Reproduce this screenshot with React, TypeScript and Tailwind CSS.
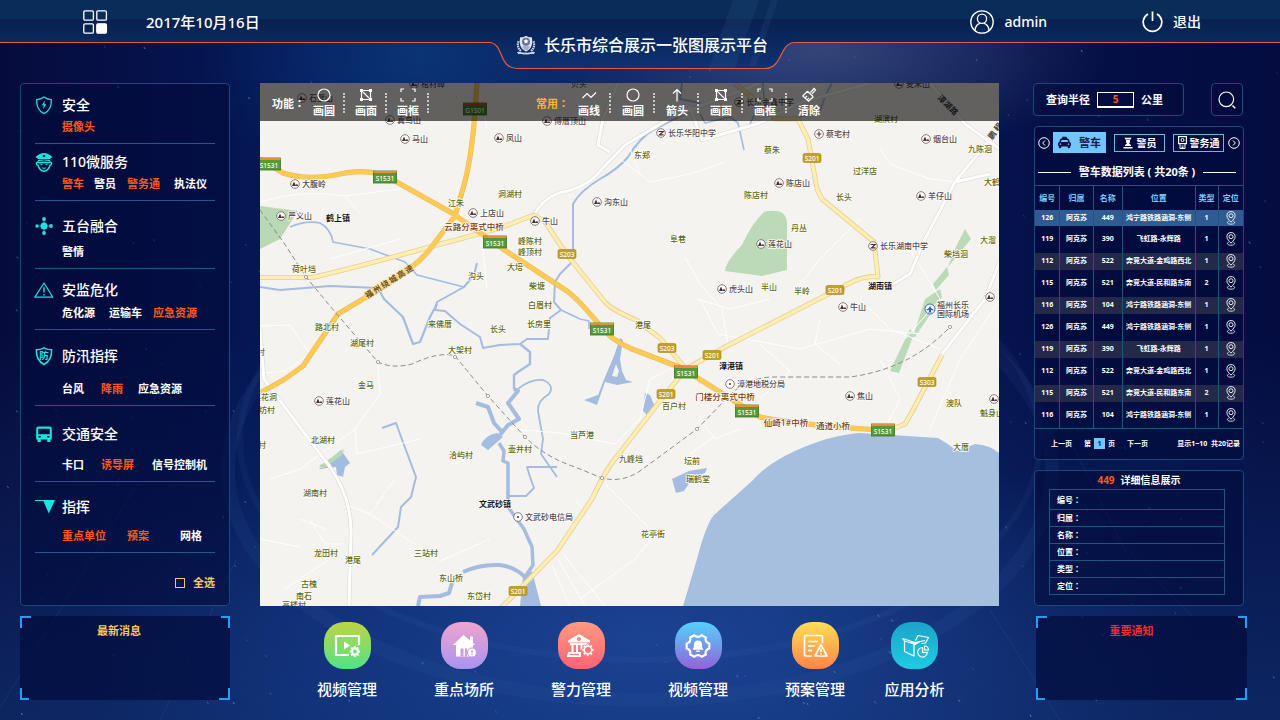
import React, { useState } from "react";
import { FaTaxi } from "react-icons/fa";

type XY = [number, number];

/* ---------- starfield ---------- */

const stars = Array.from({ length: 240 }, (_, i) => {
  const a = Math.abs(Math.sin(i * 127.1 + 11.7) * 43758.5453) % 1;
  const b = Math.abs(Math.sin(i * 269.5 + 83.3) * 24634.6345) % 1;
  const c = Math.abs(Math.sin(i * 57.3 + 9.1) * 9631.137) % 1;
  return { x: a * 1280, y: 44 + b * 676, o: 0.15 + c * 0.4 };
});

function Backdrop() {
  return (
    <svg className="pointer-events-none absolute inset-0 h-full w-full" viewBox="0 0 1280 720" preserveAspectRatio="none" aria-hidden="true">
      <defs>
        <radialGradient id="glowLow">
          <stop offset="0" stopColor="#2450a8" stopOpacity="0.6" />
          <stop offset="1" stopColor="#2450a8" stopOpacity="0" />
        </radialGradient>
        <radialGradient id="glowTop">
          <stop offset="0" stopColor="#41507f" stopOpacity="0.75" />
          <stop offset="1" stopColor="#41507f" stopOpacity="0" />
        </radialGradient>
        <radialGradient id="glowLeft">
          <stop offset="0" stopColor="#0d3f80" stopOpacity="0.7" />
          <stop offset="1" stopColor="#0d3f80" stopOpacity="0" />
        </radialGradient>
        <linearGradient id="rise" x1="0" y1="0" x2="0" y2="1">
          <stop offset="0" stopColor="#164084" stopOpacity="0" />
          <stop offset="1" stopColor="#164084" stopOpacity="0.5" />
        </linearGradient>
      </defs>
      <rect y="330" width="1280" height="390" fill="url(#rise)" />
      <ellipse cx="640" cy="640" rx="560" ry="220" fill="url(#glowLow)" />
      <ellipse cx="820" cy="50" rx="290" ry="110" fill="url(#glowTop)" />
      <ellipse cx="420" cy="55" rx="220" ry="150" fill="url(#glowLeft)" />
      <ellipse cx="640" cy="470" rx="412" ry="230" fill="none" stroke="#3a6cb0" strokeOpacity="0.1" strokeWidth="14" />
      <ellipse cx="640" cy="440" rx="400" ry="220" fill="none" stroke="#5b86c0" strokeOpacity="0.07" strokeWidth="6" />
      <path d="M0 708 140 480M160 720 236 560M1080 500 1200 625M990 610 1060 720M1060 420 1130 560" stroke="#4f86d8" strokeOpacity="0.14" fill="none" />
      {stars.map((s, i) => (
        <path key={i} d={`M${s.x.toFixed(1)} ${s.y.toFixed(1)}l1.2 2`} stroke="#a9bfff" strokeOpacity={s.o} strokeWidth="1" />
      ))}
    </svg>
  );
}

/* ---------- header ---------- */

function Emblem() {
  return (
    <svg width="20" height="20" viewBox="0 0 20 20" aria-hidden="true">
      <path d="M2.6 6.2C1 10 2 14 5.4 16.2M17.4 6.2C19 10 18 14 14.6 16.2" fill="none" stroke="#c9d2e6" strokeWidth="2.2" strokeDasharray="1.6 .7" />
      <path d="M1 17.4c3-1.6 5 .8 9 .2 4 .6 6-1.8 9-.2l-1.4 1.8c-2.6-.8-4.6.6-7.6.4-3 .2-5-1.2-7.6-.4z" fill="#c9d2e6" />
      <path d="M10 .8c2 1.3 4 1.6 5.8 1.4.8 3 .6 7.6-1 10.3-1.2 2-3 3.2-4.8 4-1.8-.8-3.6-2-4.8-4-1.6-2.7-1.8-7.3-1-10.3C6 2.4 8 2.1 10 .8z" fill="#dfe5f2" />
      <circle cx="10" cy="6.800" r="4" fill="#5d6f9b" />
      <path d="m10 3.600.8 1.700 1.800.2-1.300 1.300.3 1.800-1.600-.9-1.600.9.3-1.800-1.300-1.300 1.800-.2z" fill="#fff" />
      <path d="M6.500 12h7M7.500 14h5" stroke="#5d6f9b" strokeWidth=".9" />
    </svg>
  );
}

function Header() {
  return (
    <header className="relative flex h-[83px] items-start">
      <div className="flex h-[43px] flex-1 items-center border-b border-[#f0592f] bg-[linear-gradient(#0a2c59_19px,#07204f_19px,#0a2a5e)] pt-[2px] pl-[83px]">
        <button type="button" aria-label="菜单" className="flex">
          <svg width="25" height="25" viewBox="0 0 25 25" fill="none" stroke="#fff" strokeWidth="1.300" aria-hidden="true">
            <rect x=".8" y=".8" width="9.600" height="9.400" rx="1.200" />
            <rect x="13.800" y=".8" width="9.600" height="9.400" rx="1.200" />
            <rect x=".8" y="13.800" width="9.600" height="9.400" rx="1.200" />
            <rect x="13.800" y="13.800" width="9.600" height="9.400" rx="1.200" fill="#fff" />
          </svg>
        </button>
        <time className="ml-[38px] text-[15px] leading-5 font-medium">2017年10月16日</time>
      </div>
      <div className="relative w-[310px]">
        <svg className="block h-[70px] w-full" viewBox="0 0 310 70" aria-hidden="true">
          <defs>
            <linearGradient id="notch" x1="0" y1="0" x2="0" y2="1">
              <stop offset="0" stopColor="#07204f" />
              <stop offset="1" stopColor="#0d3273" />
            </linearGradient>
          </defs>
          <rect width="310" height="19" fill="#0a2c59" />
          <path d="M0 19H310V42.500H308C292 42.500 296 68.500 278 68.500H30C11 68.500 17 42.500 2 42.500H0z" fill="url(#notch)" />
          <path d="M0 42.500H2C17 42.500 11 68.500 30 68.500H278C296 68.500 292 42.500 308 42.500H310" fill="none" stroke="#f0592f" strokeWidth="1.200" />
          <path d="M246 0h26l-24 68h-26zM284 0h7l-22 66h-7z" fill="#4b7fae" fillOpacity=".12" />
        </svg>
        <div className="absolute inset-x-0 top-[33px] flex items-center justify-center gap-2">
          <Emblem />
          <h1 className="text-[16px] leading-6 font-medium">长乐市综合展示一张图展示平台</h1>
        </div>
      </div>
      <div className="flex h-[43px] flex-1 items-center justify-end gap-[95px] border-b border-[#e0604a] bg-[linear-gradient(#0a2c59_19px,#07204f_19px,#0a2a5e)] pt-[2px] pr-[79px]">
        <button type="button" className="flex items-center gap-2.5 text-[14px] leading-5 font-medium">
          <svg width="24" height="24" viewBox="0 0 24 24" fill="none" stroke="#fff" strokeWidth="1.300" aria-hidden="true">
            <circle cx="12" cy="12" r="11.200" />
            <circle cx="12" cy="8.800" r="4.600" />
            <path d="M5 20.300c.4-4 2.600-6.300 5-7M19 20.300c-.4-4-2.600-6.300-5-7" />
          </svg>
          admin
        </button>
        <button type="button" className="flex items-center gap-2.5 text-[14px] leading-5 font-medium">
          <svg width="21" height="22" viewBox="0 0 21 22" fill="none" stroke="#fff" strokeWidth="1.700" aria-hidden="true">
            <path d="M6 3a9.300 9.300 0 1 0 9 0M10.500.5v9.500" />
          </svg>
          退出
        </button>
      </div>
    </header>
  );
}

/* Full-width colon centred in its em box, as the traditional face draws it. */
function Colon() {
  return <span className="font-['Noto_Sans_CJK_TC',sans-serif]" lang="zh-TW">：</span>;
}

/* ---------- left side ---------- */

const cyan = "#19e6df";

const sideIcons: Record<string, React.ReactNode> = {
  shield: (
    <g fill="none" stroke={cyan} strokeWidth="1.300">
      <path d="M9 1c2.300 1.700 4.600 2.400 7.300 2.600.4 6.200-1.300 11-7.300 14-6-3-7.700-7.800-7.300-14C4.400 3.400 6.700 2.700 9 1z" />
      <path d="M9.800 4.600 6.800 9.200h1.900l-.6 4 3.200-4.900H9.400z" fill={cyan} stroke="none" />
    </g>
  ),
  officer: (
    <g>
      <path d="M9 0C6 0 2.600 2 .6 4c.8.7 1.600 1 2.400 2h12c.8-1 1.600-1.300 2.400-2C15.400 2 12 0 9 0z" fill={cyan} />
      <path d="M9 1.600 10.600 3 9 4.400 7.400 3z" fill="#041142" />
      <path d="M3 7.600C7 6.800 11 6.800 15 7.600" fill="none" stroke={cyan} strokeWidth="1.100" />
      <path d="M2.800 9C.6 9.500 1.200 12 3 12.400 4 15.500 6 18 9 18.200c3-.2 5-2.700 6-5.800 1.800-.4 2.400-2.900.2-3.400-1.700 1.400-3.700.4-6.200.4S4.500 10.400 2.800 9z" fill="none" stroke={cyan} strokeWidth="1.500" />
      <path d="M5.500 11.700h2M10.500 11.700h2M6.800 14.600c1.400 1 3 1 4.400 0" fill="none" stroke={cyan} strokeWidth="1" />
    </g>
  ),
  nodes: (
    <g fill={cyan}>
      <circle cx="9" cy="9" r="3.500" />
      <circle cx="9" cy="2" r="1.900" />
      <circle cx="9" cy="16" r="1.900" />
      <circle cx="2" cy="9" r="1.700" />
      <circle cx="16" cy="9" r="1.900" />
      <path d="M2 9h14M9 2v14" stroke={cyan} strokeWidth=".7" />
    </g>
  ),
  alert: (
    <g fill="none" stroke={cyan} strokeWidth="1.200" strokeLinejoin="round">
      <path d="M9 2 17.800 16.200H-.2z" />
      <path d="M9 6.300v5.200M9 13v1.400" strokeWidth="1.400" />
    </g>
  ),
  flood: (
    <g>
      <path d="M9 .8c2.300 1.300 5 2 7.600 2 .3 6.700-1.300 11.400-7.600 14.700C2.700 14.200 1.100 9.500 1.400 2.800c2.600 0 5.300-.7 7.600-2z" fill="none" stroke={cyan} strokeWidth="1.500" />
      <text x="9" y="12" textAnchor="middle" fontSize="9.500" fontWeight="700" fill={cyan}>防</text>
    </g>
  ),
  bus: (
    <g fill={cyan}>
      <path fillRule="evenodd" d="M3.500 1.500h11a2.300 2.300 0 0 1 2.300 2.300V14.500H1.200V3.800a2.300 2.300 0 0 1 2.300-2.300zM3.200 3.800v5.500h11.600V3.800zM3.500 11v1.600h2.300V11zm8.700 0v1.600h2.300V11z" />
      <path d="M2.500 14h3.300v3H2.500zM12.200 14h3.300v3h-3.300z" />
    </g>
  ),
  command: <path d="M0 2h20l-6.200 13.500L8.400 3.100H0z" fill={cyan} />,
};

type SideItem = { label: string; gap: string; on?: boolean };
type SideGroup = { title: string; icon: string; box: string; row: string; items: SideItem[] };

const groups: SideGroup[] = [
  { title: "安全", icon: "shield", box: "pt-[11px] pb-2", row: "mt-1", items: [{ label: "摄像头", gap: "", on: true }] },
  {
    title: "110微服务", icon: "officer", box: "pt-2 pb-2", row: "mt-1",
    items: [
      { label: "警车", gap: "", on: true },
      { label: "警员", gap: "ml-[10px]" },
      { label: "警务通", gap: "ml-[11px]", on: true },
      { label: "执法仪", gap: "ml-[14px]" },
    ],
  },
  { title: "五台融合", icon: "nodes", box: "pt-[15px] pb-2", row: "mt-2", items: [{ label: "警情", gap: "" }] },
  {
    title: "安监危化", icon: "alert", box: "pt-[11px] pb-2", row: "mt-[5px]",
    items: [
      { label: "危化源", gap: "" },
      { label: "运输车", gap: "ml-[14px]" },
      { label: "应急资源", gap: "ml-[11px]", on: true },
    ],
  },
  {
    title: "防汛指挥", icon: "flood", box: "pt-4 pb-2", row: "mt-[15px]",
    items: [
      { label: "台风", gap: "" },
      { label: "降雨", gap: "ml-[17px]", on: true },
      { label: "应急资源", gap: "ml-[15px]" },
    ],
  },
  {
    title: "交通安全", icon: "bus", box: "pt-[18px] pb-2", row: "mt-[13px]",
    items: [
      { label: "卡口", gap: "" },
      { label: "诱导屏", gap: "ml-[17px]", on: true },
      { label: "信号控制机", gap: "ml-[18px]" },
    ],
  },
  {
    title: "指挥", icon: "command", box: "pt-[15px] pb-2", row: "mt-[11px]",
    items: [
      { label: "重点单位", gap: "", on: true },
      { label: "预案", gap: "ml-[21px]", on: true },
      { label: "网格", gap: "ml-[31px]" },
    ],
  },
];

function Sidebar() {
  const [off, setOff] = useState<Record<string, boolean>>({});
  return (
    <nav className="rounded border border-[#1c4a78] bg-[#020a3a]/60 px-[14px]" aria-label="图层">
      {groups.map((g) => (
        <section key={g.title} className={`border-b border-[#23598a] ${g.box}`}>
          <h2 className="flex items-center text-[14px] leading-5 font-medium">
            <svg width="27" height="18" viewBox="0 0 27 18" className="overflow-visible" aria-hidden="true">{sideIcons[g.icon]}</svg>
            {g.title}
          </h2>
          <div className={`flex pl-[27px] ${g.row}`}>
            {g.items.map((it) => {
              const key = g.title + it.label;
              const on = !!it.on !== !!off[key];
              return (
                <button
                  key={it.label}
                  type="button"
                  aria-pressed={on}
                  onClick={() => setOff({ ...off, [key]: !off[key] })}
                  className={`shrink-0 text-[11px] leading-4 font-bold ${it.gap} ${on ? "text-[#ff5a14]" : "text-white"}`}
                >
                  {it.label}
                </button>
              );
            })}
          </div>
        </section>
      ))}
      <label className="flex items-center justify-end gap-2 pt-[22px] pb-[14px] text-[11px] leading-4 font-bold text-[#fbc85a]">
        <input type="checkbox" className="h-[10px] w-[10px] appearance-none border border-[#fbc85a] checked:bg-[#fbc85a]" />
        全选
      </label>
    </nav>
  );
}

function BracketBox({ title, tone, shift }: { title: string; tone: string; shift: string }) {
  return (
    <section className={`relative h-[84px] bg-[#020c3c]/70 pt-[7px] text-center ${shift}`}>
      <span className="absolute top-0 left-0 h-3 w-[11px] border-t-2 border-l-2 border-[#1ea2f5]" />
      <span className="absolute top-0 right-0 h-3 w-[9px] border-t-2 border-r-2 border-[#1ea2f5]" />
      <span className="absolute bottom-0 left-0 h-3 w-[9px] border-b-2 border-l-2 border-[#1ea2f5]" />
      <span className="absolute right-0 bottom-0 h-3 w-[11px] border-r-2 border-b-2 border-[#1ea2f5]" />
      <h2 className={`text-[11px] leading-4 font-bold ${tone}`}>{title}</h2>
    </section>
  );
}

/* ---------- map ---------- */

const villages: [number, number, string][] = [
  [456, 204, "江朱"], [510, 195, "洞湖村"], [642, 156, "东郑"], [756, 196, "陈店村"], [844, 198, "长头"], [799, 229, "丹丛"],
  [772, 151, "蔡朱"], [865, 172, "过洋店"], [980, 150, "九陈洄"], [992, 183, "大鹤"], [886, 120, "湖滨村"], [579, 85, "贝头"],
  [678, 240, "阜巷"], [530, 242, "峰陈村"], [530, 253, "峰顶村"], [515, 268, "大培"], [476, 277, "沟头"], [537, 287, "柴塘"],
  [540, 306, "白眉村"], [539, 325, "长房里"], [498, 330, "长头"], [440, 325, "来佛厝"], [460, 351, "大架村"], [643, 326, "港尾"],
  [304, 270, "荷叶垱"], [327, 328, "路北村"], [362, 344, "湖尾村"], [366, 386, "金马"], [257, 353, "山村"], [265, 398, "莲花洞"],
  [263, 411, "后坊村"], [323, 441, "北湖村"], [258, 446, "山村"], [315, 494, "湖南村"], [326, 554, "龙田村"], [353, 561, "港尾"],
  [309, 585, "古槐"], [304, 597, "南石"], [294, 606, "高楼村"], [426, 554, "三站村"], [451, 579, "东山桥"], [479, 597, "东岱村"],
  [461, 456, "洽屿村"], [520, 450, "壶井村"], [582, 436, "当芦港"], [631, 460, "九峰垱"], [692, 462, "坛前"], [698, 480, "瑞鹤堂"],
  [674, 407, "百户村"], [653, 535, "花亭街"], [769, 288, "半山"], [802, 292, "半岭"], [956, 255, "柴垱洄"], [988, 241, "大溜"],
  [954, 404, "澳队"], [992, 414, "魁身山"], [961, 448, "大厝"],
];

type PoiKind = "hill" | "school" | "dot" | "cross";
const pois: [number, number, string, PoiKind][] = [
  [302, 99, "石壁山", "hill"], [414, 85, "棺材嶂", "hill"], [390, 121, "真鸟山", "hill"], [405, 140, "马山", "hill"], [295, 185, "大腹岭", "hill"],
  [281, 217, "严义山", "hill"], [473, 214, "上店山", "hill"], [499, 139, "凤山", "hill"], [547, 122, "傅厝顶山", "hill"], [535, 222, "牛山", "hill"],
  [597, 203, "沟东山", "hill"], [661, 134, "长乐华阳中学", "school"], [739, 103, "长乐金鑫中学", "school"], [819, 135, "蔡宅村", "cross"],
  [779, 184, "陈店山", "hill"], [926, 140, "烟台山", "hill"], [921, 197, "羊仔山", "hill"], [761, 245, "莲花山", "hill"], [722, 290, "虎头山", "hill"],
  [843, 308, "牛山", "hill"], [873, 247, "长乐湖南中学", "school"], [850, 397, "焦山", "hill"], [730, 385, "漳港地税分局", "dot"],
  [518, 518, "文武砂电信局", "dot"], [319, 402, "莲花山", "hill"], [899, 85, "麦朱山", "hill"], [990, 298, "", "hill"], [994, 400, "", "hill"],
];

const towns: [number, number, string][] = [
  [338, 219, "鹤上镇"], [880, 287, "湖南镇"], [731, 367, "漳港镇"], [495, 505, "文武砂镇"],
];

const bridges: [number, number, string][] = [
  [474, 228, "云路分离式中桥"], [725, 398, "门楼分离式中桥"], [786, 424, "仙崎1#中桥"], [833, 427, "通道小桥"],
];

const greenShields: [number, number, string][] = [
  [269, 165, "S1531"], [385, 178, "S1531"], [495, 243, "S1531"], [602, 330, "S1531"], [686, 373, "S1531"], [747, 412, "S1531"],
  [883, 431, "S1531"], [475, 110, "G1501"],
];

const yellowShields: [number, number, string][] = [
  [567, 255, "S203"], [667, 349, "S203"], [712, 356, "S201"], [666, 395, "S201"], [835, 291, "S201"], [812, 159, "S201"],
  [518, 592, "S201"], [927, 383, "S303"],
];

const minorRoads = [
  "M535 214Q548 194 568 192 590 186 602 170L625 146 672 118 760 84",
  "M610 153 598 146 603 120 618 84M672 118 690 108 702 141 760 124 799 104 870 84",
  "M925 240 955 183 1000 128M930 84 965 125 1000 150M925 240 910 275 885 290M990 175 955 183",
  "M942 355 985 300 1000 262",
  "M260 330 264 380 290 415 330 468Q352 500 351 535L349 607",
];

const lanes = [
  "M260 203Q300 190 345 197L400 190M345 197 360 215M400 240 330 260M260 327 290 326 310 355 285 372 265 374",
  "M378 366 380 395 355 430 357 455 420 440M355 430 300 470 270 480M345 505 370 515 440 562 490 540M370 515 395 480",
  "M620 160 650 183 690 175 725 163M630 150 640 175M700 300 718 335 800 350 870 330 920 335M697 300 730 310 770 300",
  "M690 360 650 380 640 420 615 445 560 434 510 430M605 485 625 505 650 530M655 535 635 560 580 600M552 566 570 607M558 560 585 607M564 556 605 607",
  "M685 258 700 285 722 310 728 345M880 150 890 165 930 180 955 183M860 300 890 330 940 350M880 360 900 400 885 430M760 345 790 372 760 400",
  "M487 130 484 110M487 290 483 250M860 220 820 260 800 285M820 320 815 345 840 365M1000 300 960 360 930 430M910 250 940 300 905 340",
  "M300 520 325 530M310 520 325 545 345 545M285 590 330 560M260 540 300 548M575 500 590 520M700 420 715 440 740 430M715 437 690 455",
];

const rivers: { d: string; w: number }[] = [
  { d: "M682 84 680 100 700 104 690 112 655 130Q640 138 628 158 618 170 600 180 580 192 573 205L573 262 560 275 555 283 554 303 561 311 550 319 548 340 527 340 520 345 500 346 483 349 480 338 460 325 445 312 435 311 437 303 464 288 474 276 477 264", w: 2 },
  { d: "M561 311 580 320 589 322 589 330", w: 1.6 },
  { d: "M520 345 530 353 530 365 518 373 514 376 514 390", w: 2.4 },
  { d: "M514 390 518 392 508 404 519 420 508 426 500 436", w: 4 },
  { d: "M518 390Q530 380 543 381 555 386 549 395 537 402 538 412L543 440 541 455 557 478M557 468 527 468 530 478 534 489 526 497 508 497", w: 1.8 },
  { d: "M476 404 488 408 494 424 503 434", w: 4 },
  { d: "M499 444 504 452 503 462 508 464 508 508 524 530 532 548 533 566 525 578", w: 3.5 },
  { d: "M525 578Q515 568 500 566 480 565 463 573M452 584 449 594 440 597 420 598 418 607", w: 4 },
  { d: "M290 228Q306 221 320 224 331 230 333 243L370 250 405 263 417 276 464 288", w: 1.6 },
  { d: "M260 288 280 291 330 287 378 289 384 300 403 318 413 345 420 343 430 318 437 305", w: 2.2 },
  { d: "M382 429 396 424 404 446 416 478 411 498 401 508 398 528 372 556", w: 2 },
  { d: "M763 84 764 100 755 115 750 125M700 115 705 124 730 118 738 124 744 151M832 84 826 95 820 112 800 118", w: 1.6 },
];

function Pin({ x, y, kind }: { x: number; y: number; kind: PoiKind }) {
  return (
    <g transform={`translate(${x} ${y})`}>
      <circle r="4.300" fill="#fff" stroke="#7b6a6a" strokeWidth=".9" />
      {kind === "hill" && <path d="M-3 2 -1-2.400 1 2zM.6 2 2-.4 3.200 2z" fill="#4a2f2f" />}
      {kind === "school" && <path d="M-2.400-1.500H2.200L-1.500 1.800H2.600" fill="none" stroke="#4a2f2f" strokeWidth="1.200" />}
      {kind === "dot" && <circle r="1" fill="#4a2f2f" />}
      {kind === "cross" && <path d="M-2.400 0H2.400M0-2.400V2.400" stroke="#6b2f2f" strokeWidth="1.200" />}
    </g>
  );
}

function CityMap() {
  const halo = { stroke: "#fff", strokeWidth: 1.5, paintOrder: "stroke", strokeLinejoin: "round" } as const;
  const majors = [
    "M260 278.500H312Q350 270 430 248L500 229 534 216 545 223 567 256 605 303Q612 311 636 321L660 339 686 370",
    "M734 84 770 112 775 120 798 120 808 140 817 190 822 200 874 243 878 278Q865 276 850 284L725 348 686 370 660 402 618 456Q606 470 592 500L557 552 500 610",
    "M942 356 912 413 905 425 895 429",
  ];
  const highways = [
    "M260 160 283 174Q308 182 340 175 372 168 395 182L452 214 503 250 567 292Q578 300 597 323 610 341 632 350L682 369 734 402 760 418Q800 426 880 431L895 430",
    "M477 84 474 125Q470 168 462 193L455 217 430 250Q415 270 368 297L338 315 303 367 285 380 260 394",
  ];
  return (
    <svg className="absolute inset-0 h-full w-full" viewBox="260 84 739 523" preserveAspectRatio="xMidYMid slice" role="img" aria-label="长乐市地图" fontWeight="500">
      <rect x="260" y="84" width="739" height="523" fill="#f4f3f0" />
      <path d="M260 207 298 212 280 240 260 250z" fill="#b9d9b4" />
      <path d="M775 212Q786 212 787 224L787 271 762 277 725 272Q726 262 742 246 752 224 764 213 769 211 775 212zM955 250 965 230 971 240 948 268zM933 285 947 268 949 276 936 291zM913 338 925 300 940 290 942 298 915 338zM890 372 910 330 914 335 899 374z" fill="#bddab8" />
      <path d="M683 607 697 560Q706 525 714 516L752 482Q768 464 795 452 830 436 860 434L938 439Q950 446 957 452L975 445Q990 446 999 454V607z" fill="#a7bfdf" />
      <g fill="#a3bce0">
        <path fillRule="evenodd" d="M620 339 623 341 620 360 622 372 626 381 633 383 617 386 605 383 597 406 584 401 598 396 605 378 614 357zM616 365 612 377 617 378 619 372z" />
        <path d="M645 394 650 396 655 408 647 416 643 412zM319 470 341 451 350 464 345 468 343 478 337 476 336 468zM481 446Q485 436 497 434L503 438 488 451zM672 480 689 472 707 469 705 474 692 480 684 492 676 494zM523 578 532 572 541 607 520 607z" />
      </g>
      <path d="M319 467 344 450 342 456 323 470z" fill="#b9d9b4" />
      <g fill="none" stroke="#a3bce0" strokeLinejoin="round">
        {rivers.map((r, i) => <path key={i} d={r.d} strokeWidth={r.w} />)}
      </g>
      <g fill="none" stroke="#fff" strokeWidth="1" strokeOpacity=".95">
        {lanes.map((d, i) => <path key={i} d={d} />)}
      </g>
      <g fill="none" stroke="#dcdad6" strokeWidth="4.200" strokeLinejoin="round">
        {minorRoads.map((d, i) => <path key={i} d={d} />)}
      </g>
      <g fill="none" stroke="#fff" strokeWidth="3" strokeLinejoin="round">
        {minorRoads.map((d, i) => <path key={i} d={d} />)}
      </g>
      <g fill="none" stroke="#e9cf8e" strokeWidth="5" strokeLinejoin="round">
        {majors.map((d, i) => <path key={i} d={d} />)}
      </g>
      <g fill="none" stroke="#fdeeb4" strokeWidth="3.400" strokeLinejoin="round">
        {majors.map((d, i) => <path key={i} d={d} />)}
      </g>
      <g fill="none" stroke="#ecbb54" strokeWidth="5.200" strokeLinejoin="round">
        {highways.map((d, i) => <path key={i} d={d} />)}
      </g>
      <g fill="none" stroke="#fdcb55" strokeWidth="4" strokeLinejoin="round">
        {highways.map((d, i) => <path key={i} d={d} />)}
      </g>
      <path d="M260 211 284 244 306 278 335 313 378 363Q392 370 412 365 440 352 455 357L488 397 525 438Q545 458 575 468L602 479Q622 484 640 472L697 430 728 398Q745 380 770 378H850Q910 370 950 328" fill="none" stroke="#8a8a8a" strokeWidth="1" strokeDasharray="5 3" />
      {([[306, 278], [378, 363], [455, 358], [488, 397], [525, 438], [602, 479], [697, 430], [950, 328]] as XY[]).map(([x, y]) => (
        <circle key={x} cx={x} cy={y} r="1.600" fill="#fff" stroke="#8a8a8a" strokeWidth=".8" />
      ))}
      <g fontSize="8" fill="#5f6a12" textAnchor="middle" {...halo}>
        {villages.map(([x, y, t], i) => <text key={i} x={x} y={y + 3}>{t}</text>)}
      </g>
      {pois.map(([x, y, , k], i) => <Pin key={i} x={x} y={y} kind={k} />)}
      <g fontSize="8" fill="#574949" {...halo}>
        {pois.map(([x, y, t], i) => t && <text key={i} x={x + 7} y={y + 3}>{t}</text>)}
        <text x="937" y="309">福州长乐</text>
        <text x="937" y="318">国际机场</text>
      </g>
      <g transform="translate(930 310)">
        <circle r="5" fill="#fff" stroke="#3d6cb4" />
        <path d="M0-3.500 1-1 3.400.6V1.500L1 1V2.400L2 3.400H-2L-1 2.400V1L-3.400 1.500V.6L-1-1z" fill="#2f61ad" />
      </g>
      <g fontSize="8" fontWeight="700" fill="#111" textAnchor="middle" {...halo}>
        {towns.map(([x, y, t]) => <text key={t} x={x} y={y + 3}>{t}</text>)}
      </g>
      <g fontSize="8.500" fill="#7c3a10" textAnchor="middle" {...halo}>
        {bridges.map(([x, y, t]) => <text key={t} x={x} y={y + 3}>{t}</text>)}
      </g>
      <g fontSize="8" fontWeight="700" textAnchor="middle">
        <g fill="#6b4c14" stroke="#fbe3a4" strokeWidth="1.500" paintOrder="stroke">
          {["福", "州", "绕", "城", "高", "速"].map((c, i) => (
            <text key={c} transform={`translate(${369 + i * 8} ${295 - i * 5}) rotate(-32)`} y="3">{c}</text>
          ))}
        </g>
        <g fill="#3d3d3d">
          {["漳", "湖", "路"].map((c, i) => <text key={c} transform={`translate(${942 + i * 6} ${100 + i * 6}) rotate(45)`} y="3">{c}</text>)}
          {["鹏", "程"].map((c, i) => <text key={c} transform={`translate(${992 + i * 6} ${136 - i * 8}) rotate(-52)`} y="3">{c}</text>)}
        </g>
      </g>
      <g fontSize="6.500" fontWeight="500" fill="#fff" textAnchor="middle">
        {greenShields.map(([x, y, t], i) => (
          <g key={i}>
            <rect x={x - 11.5} y={y - 6} width="23" height="12" fill={t === "G1501" ? "#3c8a2e" : "#56993a"} stroke="#3b7327" strokeWidth=".8" />
            <rect x={x - 11.5} y={y - 6} width="23" height="2" fill={t === "G1501" ? "#d04a30" : "#f28a3c"} />
            <text x={x} y={y + 3.5}>{t}</text>
          </g>
        ))}
        {yellowShields.map(([x, y, t], i) => (
          <g key={i}>
            <rect x={x - 9} y={y - 4.5} width="18" height="9" rx="1.500" fill="#c2a022" stroke="#a58715" strokeWidth=".6" />
            <text x={x} y={y + 2.5}>{t}</text>
          </g>
        ))}
      </g>
    </svg>
  );
}

const toolIcons: Record<string, React.ReactNode> = {
  circle: <circle cx="8" cy="8" r="6" />,
  area: (
    <>
      <path d="M4 3.500h8M4 12.500h8M3.500 4v8M12.500 4v8M5 5l6 6" />
      <path d="M2 2h3v3H2zM11 2h3v3h-3zM2 11h3v3H2zM11 11h3v3h-3z" fill="#fff" stroke="none" />
    </>
  ),
  frame: <path d="M1 5V2h3M12 2h3v3M15 11v3h-3M4 14H1v-3" />,
  line: <path d="m1.500 11 4.500-4.500 4 4 5-5" />,
  arrow: <path d="M8 14.500V2.500M4 6.500l4-4 4 4" />,
  clear: <path d="m9.500 5.500 3.500-4 1.500 1.500-3.500 3.800M6.500 4.200l5.800 5.600M6.500 4.200 1.800 9l5.700 5.200 4.800-4.400M4 11l2-2M6 12.800l2-2" />,
};

type ToolDef = [string, string];
const primaryTools: ToolDef[] = [["画圆", "circle"], ["画面", "area"], ["画框", "frame"]];
const commonTools: ToolDef[] = [["画线", "line"], ["画圆", "circle"], ["箭头", "arrow"], ["画面", "area"], ["画框", "frame"], ["清除", "clear"]];

function Tool({ tool, width, last }: { tool: ToolDef; width: string; last?: boolean }) {
  return (
    <button type="button" className={`relative flex flex-col items-center text-[11px] leading-4 font-bold ${width}`}>
      <svg width="16" height="16" viewBox="0 0 16 16" fill="none" stroke="#fff" strokeWidth="1.200" aria-hidden="true">{toolIcons[tool[1]]}</svg>
      {tool[0]}
      {!last && <span className="absolute top-[6px] right-0 h-5 border-r-2 border-dotted border-[#c9c9c9]" />}
    </button>
  );
}

function MapPanel() {
  return (
    <section className="relative flex-1 overflow-hidden bg-[#f4f3f0]" aria-label="地图">
      <CityMap />
      <div className="absolute inset-x-0 top-0 flex h-[38px] items-center bg-[#000]/60 pt-[2px] pl-3">
        <span className="w-[31px] shrink-0 text-[11px] leading-4 font-bold whitespace-nowrap">功能<Colon /></span>
        {primaryTools.map((t) => <Tool key={t[0]} tool={t} width="w-[42px]" />)}
        <span className="ml-[107px] w-[31px] shrink-0 text-[11px] leading-4 font-bold whitespace-nowrap text-[#f7b23c]">常用<Colon /></span>
        {commonTools.map((t, i) => <Tool key={t[0]} tool={t} width="w-[44px]" last={i === commonTools.length - 1} />)}
      </div>
    </section>
  );
}

/* ---------- right side ---------- */

const tableRows: [string, string, string, string, string][] = [
  ["126", "阿克苏", "449", "鸿宁路铁路涵洞-东侧", "1"],
  ["119", "阿克苏", "390", "飞虹路-永辉路", "1"],
  ["112", "阿克苏", "522", "奔竞大道-金鸡路西北", "1"],
  ["115", "阿克苏", "521", "奔竞大道-民和路东南", "2"],
  ["116", "阿克苏", "104", "鸿宁路铁路涵洞-东侧", "1"],
  ["126", "阿克苏", "449", "鸿宁路铁路涵洞-东侧", "1"],
  ["119", "阿克苏", "390", "飞虹路-永辉路", "1"],
  ["112", "阿克苏", "522", "奔竞大道-金鸡路西北", "1"],
  ["115", "阿克苏", "521", "奔竞大道-民和路东南", "2"],
  ["116", "阿克苏", "104", "鸿宁路铁路涵洞-东侧", "1"],
];

function LocateIcon() {
  return (
    <svg width="10" height="14" viewBox="0 0 10 14" fill="none" stroke="#fff" aria-hidden="true">
      <path d="M5 11.200C3 9 .9 7 .9 4.700a4.100 4.100 0 0 1 8.200 0C9.100 7 7 9 5 11.200z" strokeWidth=".9" />
      <circle cx="5" cy="4.700" r="2" strokeWidth=".9" />
      <path d="M2.700 10.200c-2.300.7-1.700 3 2.300 3s4.600-2.300 2.300-3" strokeWidth=".8" />
    </svg>
  );
}

function Arrow({ d, label, place }: { d: string; label: string; place: string }) {
  return (
    <button type="button" aria-label={label} className={`shrink-0 ${place}`}>
      <svg className="block" width="12" height="12" viewBox="0 0 12 12" fill="none" stroke="#fff" strokeWidth="1" aria-hidden="true">
        <circle cx="6" cy="6" r="5.300" />
        <path d={d} />
      </svg>
    </button>
  );
}

function QueryBar() {
  return (
    <form className="flex justify-between pr-px" onSubmit={(e) => e.preventDefault()}>
      <div className="flex h-[33px] w-[151px] items-center rounded border border-[#1c4a78] bg-[#020a3a]/40 pl-3 text-[11px] leading-4 font-bold">
        <label htmlFor="radius">查询半径</label>
        <input id="radius" defaultValue="5" className="mx-[7px] h-4 w-[37px] border border-b-2 border-white bg-transparent text-center text-[10px] leading-3 font-bold text-[#ff5a14]" />
        <span>公里</span>
      </div>
      <button type="submit" aria-label="查询" className="flex h-[33px] w-8 items-center justify-center rounded border border-[#1c4a78] bg-[#020a3a]/40">
        <svg width="18" height="18" viewBox="0 0 18 18" fill="none" stroke="#fff" strokeWidth="1.200" aria-hidden="true">
          <circle cx="8.300" cy="8.300" r="7.300" />
          <path d="m14.500 14.500 2.700 2.700" strokeWidth="1.500" />
        </svg>
      </button>
    </form>
  );
}

function DataPanel() {
  const cell = "border-r border-[#1f5580] p-0 text-center last:border-r-0";
  const tab = "ml-2 flex h-[18px] w-[51px] items-center justify-center gap-1 border border-[#6db6ea] text-[10px] leading-3 font-bold whitespace-nowrap";
  return (
    <section className="mt-[10px] ml-px flex flex-1 flex-col rounded border border-[#1c4a78] bg-[#020a3a]/60">
      <div className="flex items-center px-[3px] pt-[5px]">
        <Arrow d="M7 3.500 4.700 6 7 8.500" label="上一组" place="" />
        <button type="button" aria-pressed="true" className="ml-[3px] flex h-[21px] w-[53px] items-center justify-center gap-2 bg-[#74c5fb] text-[11px] leading-4 font-bold text-[#0a1d4d]">
          <FaTaxi size={13} color="#06133c" aria-hidden="true" />
          警车
        </button>
        <button type="button" aria-pressed="false" className={tab}>
          <svg width="10" height="12" viewBox="0 0 10 12" fill="#fff" aria-hidden="true">
            <path d="M1.500.8h7L7.600 2.500H2.400zM3 3h4v2.200L6 6.500l2 1.500v1H2V8l2-1.500-1-1.300zM.5 10h9v1.500h-9z" />
          </svg>
          警员
        </button>
        <button type="button" aria-pressed="false" className={tab}>
          <svg className="-mr-px" width="9" height="13" viewBox="0 0 9 13" fill="none" stroke="#fff" aria-hidden="true">
            <rect x=".6" y=".6" width="7.800" height="7" strokeWidth="1.200" />
            <circle cx="4.500" cy="4" r="1.500" />
            <path d="M2 8v4.500h5V8M3.500 10h2M3.500 11.500h2" />
          </svg>
          警务通
        </button>
        <Arrow d="M5 3.500 7.300 6 5 8.500" label="下一组" place="ml-auto" />
      </div>
      <h2 className="flex items-center gap-1 px-[3px] pt-[11px] pb-[5px] text-[11px] leading-4 font-bold whitespace-nowrap before:mr-1 before:h-px before:flex-1 before:bg-white after:mr-1 after:ml-1 after:h-px after:flex-1 after:bg-white">
        警车数据列表 ( 共20条 )
      </h2>
      <table className="w-full table-fixed border-collapse border-y border-[#1f5580] text-[7px] leading-[10px] font-bold whitespace-nowrap">
        <colgroup>
          <col className="w-[12%]" />
          <col className="w-[16%]" />
          <col className="w-[14%]" />
          <col className="w-[35%]" />
          <col className="w-[11%]" />
          <col className="w-[12%]" />
        </colgroup>
        <thead>
          <tr className="h-6 text-[8px] text-[#79c8f5]">
            {["编号", "归属", "名称", "位置", "类型", "定位"].map((h) => (
              <th key={h} scope="col" className={cell}>{h}</th>
            ))}
          </tr>
        </thead>
        <tbody>
          {tableRows.map((r, i) => (
            <tr key={i} className={i === 0 ? "h-4 bg-[#2f5a92]" : i % 2 === 0 ? "h-[17px] bg-[#24294a]" : "h-[27px]"}>
              {r.map((c, j) => <td key={j} className={cell}>{c}</td>)}
              <td className={cell}>
                <button type="button" aria-label={`定位 ${r[0]}`} className="mx-auto block"><LocateIcon /></button>
              </td>
            </tr>
          ))}
        </tbody>
      </table>
      <div className="flex items-center pt-[9px] pr-[3px] pl-4 text-[7px] leading-[10px] font-bold whitespace-nowrap">
        <button type="button">上一页</button>
        <span className="ml-3">第</span>
        <span className="mx-[3px] flex h-[11px] w-[11px] items-center justify-center bg-[#74c5fb] text-[#0a1d4d]">1</span>
        <span>页</span>
        <button type="button" className="ml-3">下一页</button>
        <span className="ml-auto">显示1~10&nbsp; 共20记录</span>
      </div>
    </section>
  );
}

function DetailPanel() {
  return (
    <section className="mt-[10px] ml-px rounded border border-[#1c4a78] bg-[#020a3a]/60 pr-[18px] pb-[10px] pl-[14px]">
      <h2 className="py-1 pl-1 text-center text-[10px] leading-[10px] font-bold">
        <span className="mr-1.5 text-[#ff5a14]">449</span>详细信息展示
      </h2>
      <table className="w-full border-collapse border border-[#1f5580] text-[8px] leading-3 font-bold">
        <tbody>
          {["编号", "归属", "名称", "位置", "类型", "定位"].map((k) => (
            <tr key={k} className="h-[17px] border-b border-[#1f5580] first:h-5">
              <th scope="row" className="w-9 py-0 pr-0 pl-[7px] text-left whitespace-nowrap">{k}<Colon /></th>
              <td className="p-0" />
            </tr>
          ))}
        </tbody>
      </table>
    </section>
  );
}

/* ---------- bottom dock ---------- */

const gearPath = "M6-1.100 6 1.100 4.300 1.600 3.900 2.500 4.800 4 3.300 5.400 1.900 4.500 1 4.900.6 6.500H-1L-1.400 4.900-2.300 4.400-3.800 5.200-5.100 3.800-4.200 2.400-4.600 1.500-6.200 1V-1L-4.600-1.500-4.200-2.400-5.100-3.800-3.800-5.200-2.300-4.400-1.400-4.900-1-6.500H.6L1-4.900 1.900-4.500 3.300-5.400 4.800-4 3.900-2.500 4.300-1.600z";

const dockItems: { label: string; tile: string; width: string; icon: React.ReactNode }[] = [
  {
    label: "视频管理", tile: "bg-[linear-gradient(#bfd444,#4fe388)]", width: "w-[117px]",
    icon: (
      <>
        <path d="M16 23H3V4h23v9" fill="none" stroke="#fff" strokeWidth="2.200" />
        <path d="m11 9.500 6 4-6 4z" fill="#fff" />
        <path d={gearPath} transform="translate(22 19.500) scale(.85)" fill="#fff" />
        <circle cx="22" cy="19.500" r="1.900" fill="#63de78" />
      </>
    ),
  },
  {
    label: "重点场所", tile: "bg-[linear-gradient(#f0a4cc,#a993f2)]", width: "w-[117px]",
    icon: (
      <>
        <path d="M13.500 3 20 8.500V4.500h3V11l2 2H23v11.500H6V13H3z" fill="#fff" />
        <path d="M10.500 16.500h3v8h-3zM15 16.500h2v8h-2z" fill="#cc9be0" />
        <circle cx="22" cy="20.500" r="4.500" fill="#fff" stroke="#c99be2" strokeWidth="1.200" />
        <path d="M22 18v3.200M22 22v1.300" stroke="#b898e8" strokeWidth="1.200" />
      </>
    ),
  },
  {
    label: "警力管理", tile: "bg-[linear-gradient(#ff9a80,#ff6176)]", width: "w-[117px]",
    icon: (
      <>
        <path fillRule="evenodd" d="M12 2 23 8.500v2H1v-2zM12 5a2 2 0 1 0 .01 0z" fill="#fff" />
        <path d="M3 12h18M5.500 12v9M10 12v9M14.500 12v6M2 21h11v3H1z" fill="none" stroke="#fff" strokeWidth="2" />
        <path d={gearPath} transform="translate(21 18)" fill="#fff" stroke="#ff7a7a" strokeWidth=".8" />
        <circle cx="21" cy="18" r="3" fill="#ff757a" />
      </>
    ),
  },
  {
    label: "视频管理", tile: "bg-[linear-gradient(#52d2fc,#9462da)]", width: "w-[117px]",
    icon: (
      <>
        <path d="M10.300 3.200Q14 6.600 17.700 3.200L21.800 5.500Q20.800 10.300 25.300 11.500V16.500Q20.800 17.700 21.800 22.500L17.700 24.800Q14 21.400 10.300 24.800L6.200 22.500Q7.200 17.700 2.700 16.500V11.500Q7.200 10.300 6.200 5.500z" fill="none" stroke="#fff" strokeWidth="2.200" strokeLinejoin="round" />
        <path d="M14 8.500c3 0 4 2 4 4.200 0 3 .8 4 1.700 5H8.300c.9-1 1.700-2 1.700-5 0-2.200 1-4.200 4-4.200zM12.300 18.500h3.400v1.500h-3.400z" fill="#fff" />
      </>
    ),
  },
  {
    label: "预案管理", tile: "bg-[linear-gradient(#ffdf55,#ff8448)]", width: "w-[117px]",
    icon: (
      <g fill="none" stroke="#fff" strokeWidth="1.700" strokeLinejoin="round">
        <path d="M11 24H5a1.500 1.500 0 0 1-1.500-1.500V5A1.500 1.500 0 0 1 5 3.500h15A1.500 1.500 0 0 1 21.500 5v6M7 9.500h10M7 14h7M7 18.500h4" />
        <path d="M20 12.500 26 24H14zM20 16.500v3.500M20 21.300v1.200" />
      </g>
    ),
  },
  {
    label: "应用分析", tile: "bg-[linear-gradient(#1ba4c8,#20cbe2)]", width: "w-[82px]",
    icon: (
      <g fill="none" stroke="#fff" strokeWidth="1.200" strokeLinejoin="round">
        <path d="M1.500 6.500 14 10.500l10-2M3.500 9v10.500L13 24V12M3.500 9l9.500 3 4-1.500M14.500 8.500 17 3.500l10.500 2L24.500 11l-4 .5M1.500 6.500l2 2.500" />
        <path d="m8 9.500 6 1 6-1-6.500 4z" fill="#fff" stroke="none" />
        <path d="M21.500 15.500a4.800 4.800 0 1 0 4.800 4.800h-4.800zM23.500 14a4 4 0 0 1 4 4h-4z" />
      </g>
    ),
  },
];

function Dock() {
  return (
    <nav className="flex flex-1 justify-center pt-[6px] pr-[15px]" aria-label="应用">
      {dockItems.map((d, i) => (
        <a key={i} href="#" className={`flex flex-col items-center text-[15px] leading-5 font-medium whitespace-nowrap ${d.width}`}>
          <span className={`mb-[10px] flex h-[47px] w-[47px] items-center justify-center rounded-[20px] ${d.tile}`}>
            <svg width="28" height="28" viewBox="0 0 28 28" aria-hidden="true">{d.icon}</svg>
          </span>
          {d.label}
        </a>
      ))}
    </nav>
  );
}

export default function App() {
  return (
    <div className="relative flex min-h-screen flex-col overflow-hidden bg-[linear-gradient(90deg,#060b3c,#04195a_25%,#0b2468_60%,#041048_82%,#040c40)] font-['Noto_Sans','Noto_Sans_CJK_SC',sans-serif] text-white">
      <Backdrop />
      <Header />
      <main className="relative flex flex-col gap-[10px] pr-9 pb-5 pl-5">
        <div className="flex">
          <div className="mr-[30px] w-[210px] shrink-0">
            <Sidebar />
          </div>
          <MapPanel />
          <aside className="ml-[34px] flex w-[211px] shrink-0 flex-col">
            <QueryBar />
            <DataPanel />
            <DetailPanel />
          </aside>
        </div>
        <div className="flex">
          <div className="mr-[30px] w-[210px] shrink-0">
            <BracketBox title="最新消息" tone="text-[#fbc85a]" shift="pr-3" />
          </div>
          <Dock />
          <div className="ml-[34px] w-[211px] shrink-0">
            <BracketBox title="重要通知" tone="text-[#f32b2b]" shift="ml-[3px] -mr-[3px] pr-5" />
          </div>
        </div>
      </main>
    </div>
  );
}
